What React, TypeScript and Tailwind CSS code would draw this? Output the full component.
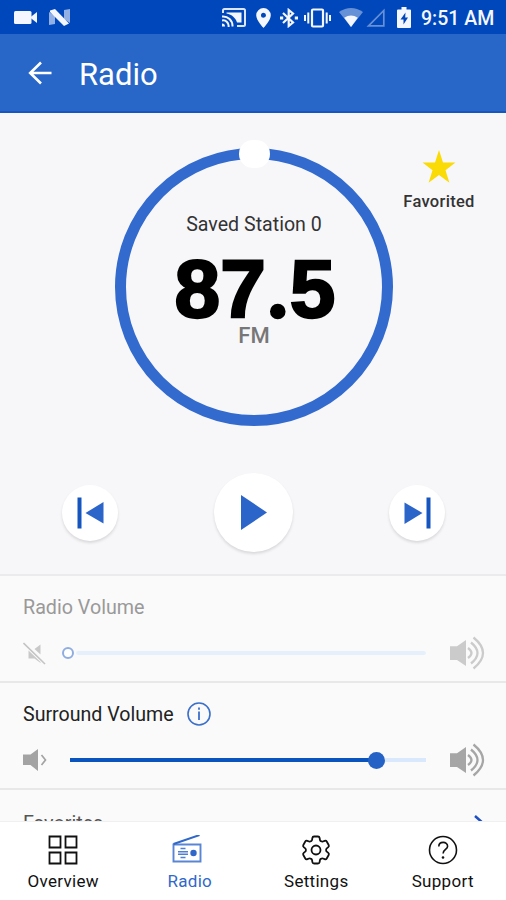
import React from 'react';
import { HiOutlineCog6Tooth } from 'react-icons/hi2';

type IconProps = { className?: string };

const CameraIcon = ({ className }: IconProps) => (
  <svg className={className} width="23" height="13" viewBox="0 0 23 13" fill="currentColor">
    <rect x="0" y="0" width="17.500" height="13" rx="1.5" />
    <path d="M16 6.5 23 1v11z" />
  </svg>
);

const NIcon = ({ className }: IconProps) => (
  <svg className={className} width="21" height="17" viewBox="0 0 21 17" fill="currentColor">
    <path d="M0 3 6 7v8l-6 1zM15 1l6-1v14l-6-4z" opacity=".6" />
    <path d="M1 1.500 6 0 20 14.500 15 17 1 3z" />
  </svg>
);

const CastIcon = ({ className }: IconProps) => (
  <svg className={className} width="24" height="19" viewBox="0 0 24 19" fill="none" stroke="currentColor" strokeWidth="2">
    <path d="M1 5V2.500Q1 1 2.500 1h19Q23 1 23 2.500v14q0 1.500-1.500 1.500H15" opacity=".9" />
    <path d="M4.500 4.500h15v10h-4.500C13.500 10 10 6.500 4.500 5.500z" fill="currentColor" stroke="none" />
    <path d="M0 8.500a9.500 9.500 0 0 1 10.500 10M0 12.500A5.500 5.500 0 0 1 6.500 19" />
    <path d="M0 15.500a3 3 0 0 1 3 3H0z" fill="currentColor" stroke="none" />
  </svg>
);

const PinIcon = ({ className }: IconProps) => (
  <svg className={className} width="15" height="20" viewBox="0 0 15 20" fill="currentColor">
    <path fillRule="evenodd" d="M7.500 0A7.300 7.300 0 0 0 .2 7.300C.2 12.500 7.500 20 7.500 20s7.300-7.500 7.300-12.700A7.300 7.300 0 0 0 7.500 0zm0 9.700a2.500 2.500 0 1 1 0-5 2.500 2.500 0 0 1 0 5z" />
  </svg>
);

const BluetoothIcon = ({ className }: IconProps) => (
  <svg className={className} width="18" height="20" viewBox="0 0 18 20" fill="none" stroke="currentColor" strokeWidth="2.200">
    <path d="m3 5 10 9.500L8.700 18V2L13 5.500 3 15" />
    <path d="M0 10h3.200M14.800 10H18" strokeWidth="3" />
  </svg>
);

const VibrateIcon = ({ className }: IconProps) => (
  <svg className={className} width="27" height="20" viewBox="0 0 27 20" fill="none" stroke="currentColor" strokeWidth="2.200">
    <rect x="8" y="1.500" width="11" height="17" rx="1" />
    <path d="M1 7v6M4.300 4.500v11M22.700 4.500v11M26 7v6" strokeWidth="2" />
  </svg>
);

const WifiIcon = ({ className }: IconProps) => (
  <svg className={className} width="24" height="19" viewBox="0 0 24 19" fill="currentColor">
    <path d="M0 4Q12-4 24 4L12 19z" opacity=".42" />
    <path d="M5.200 9.800q6.800-4.800 13.600 0L12 19z" />
  </svg>
);

const SignalIcon = ({ className }: IconProps) => (
  <svg className={className} width="19" height="19" viewBox="0 0 19 19" fill="none" stroke="currentColor" strokeWidth="1.700">
    <path d="M2.500 17.800H17.800V2.500z" opacity=".42" />
  </svg>
);

const BatteryIcon = ({ className }: IconProps) => (
  <svg className={className} width="14" height="21" viewBox="0 0 14 21">
    <path d="M4.500 0h5v2.500H13q1 0 1 1V20q0 1-1 1H1q-1 0-1-1V3.500q0-1 1-1h3.500z" fill="currentColor" />
    <path d="M8.500 5.500 3.500 12.500h3v5l4.500-7H8.200z" fill="#0047bb" />
  </svg>
);

const BackIcon = () => (
  <svg width="24" height="24" viewBox="0 0 24 24" fill="none" stroke="currentColor" strokeWidth="2.600">
    <path d="M23.500 12H2.500M13 1.500 2.200 12 13 22.500" />
  </svg>
);

const SkipIcon = ({ className }: IconProps) => (
  <svg className={className} width="27" height="32" viewBox="0 0 27 32">
    <rect x="22.500" y="0.500" width="4" height="31" fill="#1555bf" />
    <path d="M0.500 5.500 18.500 16 0.500 27z" fill="#2c65ca" />
  </svg>
);

const MutedIcon = () => (
  <svg width="23" height="23" viewBox="0 0 23 23" fill="none">
    <path d="M5.500 8.500 17.500 20v1l-6-4.500h-6zM11.500 7 17.500 2.500v10z" fill="#c9c9c9" />
    <path d="m.5 1 21.500 21" stroke="#c4c4c4" strokeWidth="1.600" />
  </svg>
);

const QuietIcon = () => (
  <svg width="24" height="22" viewBox="0 0 24 22" fill="none">
    <path d="M0 5.500h7.500L15 0v22l-7.500-6H0z" fill="#a3a3a3" />
    <path d="m18.500 6 4 5-4 5" stroke="#a3a3a3" strokeWidth="1.700" />
  </svg>
);

const LoudIcon = ({ className }: IconProps) => (
  <svg className={className} width="35" height="34" viewBox="0 0 35 34" fill="none" stroke="currentColor" strokeWidth="2.300">
    <path d="M0 10.300h7L16 4v26l-9-6H0z" fill="currentColor" stroke="none" />
    <path d="M18 12q7 5 0 10M21 6.500q13 10.500 0 21M23.500 1.500q19 15.500 0 31" />
  </svg>
);

const InfoIcon = () => (
  <svg width="24" height="24" viewBox="0 0 24 24" fill="none" stroke="#3a6fca">
    <circle cx="12" cy="12" r="11" strokeWidth="1.600" />
    <path d="M12 9.500V18M12 5.500v2.200" strokeWidth="1.800" />
  </svg>
);

const OverviewIcon = () => (
  <svg width="30" height="30" viewBox="0 0 30 30" fill="none" stroke="currentColor" strokeWidth="1.800">
    <path d="M1.500 1.500h11v11h-11zM17.500 1.500h11v11h-11zM1.500 17.500h11v11h-11zM17.500 17.500h11v11h-11z" />
  </svg>
);

const RadioIcon = () => (
  <svg className="mr-[5px]" width="30" height="30" viewBox="0 0 30 30" fill="none" stroke="currentColor">
    <path d="M1.500 9.500h27v17h-27z" strokeWidth="1.900" opacity=".8" />
    <path d="M1.500 9 27.500 0" strokeWidth="1.900" />
    <path d="M8.500 13.500h5M6 16.800h10M6 19.200h10M8.500 22.500h5" strokeWidth="1.600" opacity=".85" />
    <circle cx="21.500" cy="18" r="3.200" fill="currentColor" stroke="none" />
  </svg>
);

const SettingsIcon = () => <HiOutlineCog6Tooth className="-m-[3px]" size={36} strokeWidth={1.2} />;

const SupportIcon = () => (
  <svg width="30" height="30" viewBox="0 0 30 30" fill="none" stroke="currentColor" strokeWidth="1.600">
    <circle cx="15" cy="15" r="13.500" />
    <path d="M10.800 11.500c0-5.500 8.800-5.500 8.800-.3 0 3.300-4.500 3.300-4.500 7.300" />
    <circle cx="15" cy="22.500" r="1.300" fill="currentColor" stroke="none" />
  </svg>
);

const tabs = [
  { label: 'Overview', icon: <OverviewIcon /> },
  { label: 'Radio', icon: <RadioIcon />, active: true },
  { label: 'Settings', icon: <SettingsIcon /> },
  { label: 'Support', icon: <SupportIcon /> },
];

const StatusBar = () => (
  <div className="flex h-[34px] shrink-0 items-center bg-[#0047bb] pl-[14px] pt-px text-[#f4f7ff]">
    <CameraIcon />
    <NIcon className="ml-[12px]" />
    <CastIcon className="ml-[152px]" />
    <PinIcon className="ml-[10px]" />
    <BluetoothIcon className="ml-[9px]" />
    <VibrateIcon className="ml-[6px]" />
    <WifiIcon className="ml-[8px]" />
    <SignalIcon className="ml-[3px]" />
    <BatteryIcon className="ml-[12px]" />
    <span className="ml-[10px] whitespace-nowrap pt-[2px] text-[19.500px] font-medium">9:51 AM</span>
  </div>
);

const Station = () => (
  <section className="relative h-[461px] shrink-0 bg-[#f7f7fa]">
    <div className="flex justify-center pt-[35px] pl-[2px]">
      <div className="relative flex h-[278px] w-[278px] flex-col items-center rounded-full border-[11px] border-[#326ace]">
        <div className="absolute -top-[19px] h-[28px] w-[31px] rounded-full bg-white" />
        <p className="mt-[54px] text-[19.600px] leading-6 text-[#333]">Saved Station 0</p>
        <p className="mt-[22px] flex h-[60px] items-center pl-[2px] font-['Liberation_Sans',sans-serif] text-[82px] leading-[60px] font-bold text-black [-webkit-text-stroke:2.4px_black]">
          <span>87</span>
          <span className="-mx-px font-[Inter] text-[78px]">.</span>
          <span>5</span>
        </p>
        <p className="mt-[5px] text-[22px] leading-6 font-medium text-[#777]">FM</p>
      </div>
    </div>
    <div className="mt-[47px] flex items-center justify-between pr-[61px] pl-[62px]">
      <button className="flex h-14 w-14 items-center justify-center rounded-full bg-white pl-px shadow-[0_2px_3px_rgba(0,0,0,0.12)]">
        <SkipIcon className="rotate-180" />
      </button>
      <button className="flex h-[79px] w-[79px] items-center justify-center rounded-full bg-white shadow-[0_2px_3px_rgba(0,0,0,0.12)]">
        <svg width="26" height="35" viewBox="0 0 26 35" fill="#2c65ca">
          <path d="M0 0 26 17.500 0 35z" />
        </svg>
      </button>
      <button className="flex h-14 w-14 items-center justify-center rounded-full bg-white shadow-[0_2px_3px_rgba(0,0,0,0.12)]">
        <SkipIcon />
      </button>
    </div>
    <div className="absolute top-[37px] left-[389px] flex w-[100px] flex-col items-center">
      <svg width="34" height="33" viewBox="0 0 34 33" fill="#fadb05">
        <path d="m17 0 4 12.500h12.500l-10 7.700 3.900 12.500L17 25 6.600 32.700l3.900-12.500-10-7.700H13z" />
      </svg>
      <span className="mt-[9px] text-[16.500px] leading-5 font-medium tracking-[0.300px] text-[#333]">Favorited</span>
    </div>
  </section>
);

const App: React.FC = () => {
  return (
    <div className="flex h-[900px] w-[506px] flex-col overflow-hidden bg-[#fafafa] font-[Roboto,sans-serif]">
      <StatusBar />
      <header className="flex h-[79px] shrink-0 items-center border-b-2 border-[#1855bd] bg-[#2866c8] pt-px pl-[28px] text-white">
        <BackIcon />
        <h1 className="ml-[27px] pt-[4px] text-[31px] leading-10">Radio</h1>
      </header>
      <Station />

      <section className="h-[107px] shrink-0 border-t-2 border-[#ebebed] pt-[20px] pl-[23px]">
        <p className="text-[19.700px] leading-6 text-[#999]">Radio Volume</p>
        <div className="mt-[16px] flex h-[34px] items-center">
          <MutedIcon />
          <div className="ml-[16px] h-3 w-3 rounded-full border-[2.500px] border-[#8fade1] bg-white" />
          <div className="ml-[2px] h-[4px] w-[350px] rounded-full bg-[#e6f0fd]" />
          <LoudIcon className="ml-[24px] text-[#cbcbcb]" />
        </div>
      </section>

      <section className="h-[107px] shrink-0 border-t-2 border-[#e8e8e8] pt-[20px] pl-[23px]">
        <div className="flex h-6 items-center">
          <p className="text-[19.600px] leading-6 text-[#222]">Surround Volume</p>
          <div className="mb-[3px] ml-[13px]">
            <InfoIcon />
          </div>
        </div>
        <div className="mt-[16px] flex h-[34px] items-center">
          <QuietIcon />
          <div className="ml-[23px] h-[4px] w-[299px] bg-[#0a54bd]" />
          <div className="-ml-px h-[17px] w-[17px] rounded-full bg-[#2462c6]" />
          <div className="h-[4px] w-[41px] bg-[#d9e8fd]" />
          <LoudIcon className="ml-[24px] text-[#a6a6a6]" />
        </div>
      </section>

      <section className="flex h-[33px] shrink-0 justify-between overflow-hidden border-t-2 border-[#e8e8e8] pt-[22px] pr-[20px] pl-[23px]">
        <p className="text-[19.700px] leading-6 text-[#555]">Favorites</p>
        <svg className="mt-[2px]" width="13" height="20" viewBox="0 0 13 20" fill="none" stroke="#1c4fc4" strokeWidth="2.500">
          <path d="m2 2 9 8-9 8" />
        </svg>
      </section>

      <nav className="flex h-[79px] shrink-0 border-t border-[#f0f0f0] bg-white">
        {tabs.map((tab) => (
          <div key={tab.label} className={`flex w-1/4 flex-col items-center pt-[13px] ${tab.active ? 'text-[#2f68c9]' : 'text-[#111]'}`}>
            {tab.icon}
            <span className="mt-[6px] text-[17px] leading-5 tracking-[0.300px]">{tab.label}</span>
          </div>
        ))}
      </nav>
    </div>
  );
};

export default App;
